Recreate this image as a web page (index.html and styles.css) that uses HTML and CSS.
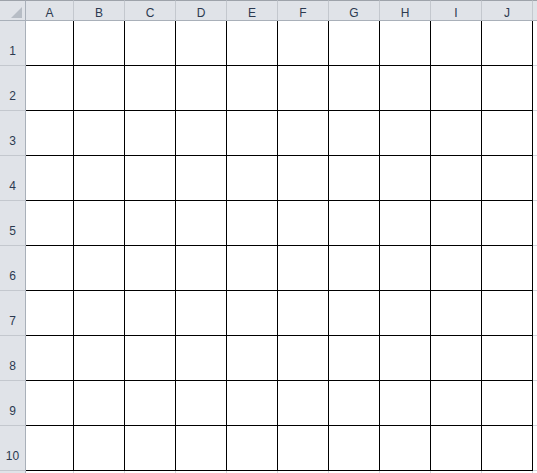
FILE: index.html
```html
<!DOCTYPE html>
<html lang="en">
<head>
  <meta charset="UTF-8">
  <title>Sheet1</title>
  <link rel="stylesheet" href="styles.css">
</head>
<body>

<div class="sheet" id="sheet"></div>

<script>
  const cols = ['A', 'B', 'C', 'D', 'E', 'F', 'G', 'H', 'I', 'J'];
  const rows = 10;
  const sheet = document.getElementById('sheet');

  let html = '<div class="corner"><span class="corner-mark"></span></div>';
  cols.forEach(c => {
    html += `<div class="col-head">${c}</div>`;
  });
  html += '<div class="col-head extra"></div>';

  for (let r = 1; r <= rows; r++) {
    html += `<div class="row-head">${r}</div>`;
    cols.forEach(() => {
      html += '<div class="cell"></div>';
    });
    html += '<div class="cell extra"></div>';
  }

  // partial row 11 at the bottom edge
  html += '<div class="row-head"></div>';
  for (let i = 0; i <= cols.length; i++) {
    html += '<div class="cell extra"></div>';
  }

  sheet.innerHTML = html;
</script>

</body>
</html>
```

FILE: styles.css
```css
body {
  margin: 0;
  padding: 0;
  background: #fff;
  overflow: hidden;
  font-family: "Liberation Sans", Arial, sans-serif;
}

.sheet {
  display: grid;
  grid-template-columns: 26px 48px repeat(9, 51px) 20px;
  grid-template-rows: 21px repeat(10, 45px) 20px;
}

.sheet > div {
  box-sizing: border-box;
}

/* Headers */
.corner,
.col-head {
  background: #e0e3e8;
  border-top: 1px solid #9ea3aa;
  border-bottom: 1px solid #a9b0b9;
  border-right: 1px solid #c4c8ce;
}

.corner {
  position: relative;
  border-right-color: #a9b0b9;
}

.corner-mark {
  position: absolute;
  left: 11px;
  top: 6px;
  width: 11px;
  height: 11px;
  background: #b7bdc5;
  clip-path: polygon(100% 0, 100% 100%, 0 100%);
}

.col-head {
  font-size: 12px;
  color: #2c3a50;
  text-align: center;
  line-height: 12px;
  padding-top: 6px;
}

.row-head {
  background: #e0e3e8;
  border-right: 1px solid #a9b0b9;
  border-bottom: 1px solid #c4c8ce;
  font-size: 12px;
  color: #2c3a50;
  display: flex;
  align-items: flex-end;
  justify-content: center;
  padding-bottom: 7px;
}

/* Cells */
.cell {
  background: #fff;
  border-right: 1px solid #000;
  border-bottom: 1px solid #000;
}

.cell.extra {
  border-right: 1px solid #d4d8de;
  border-bottom: 1px solid #d4d8de;
}
```
